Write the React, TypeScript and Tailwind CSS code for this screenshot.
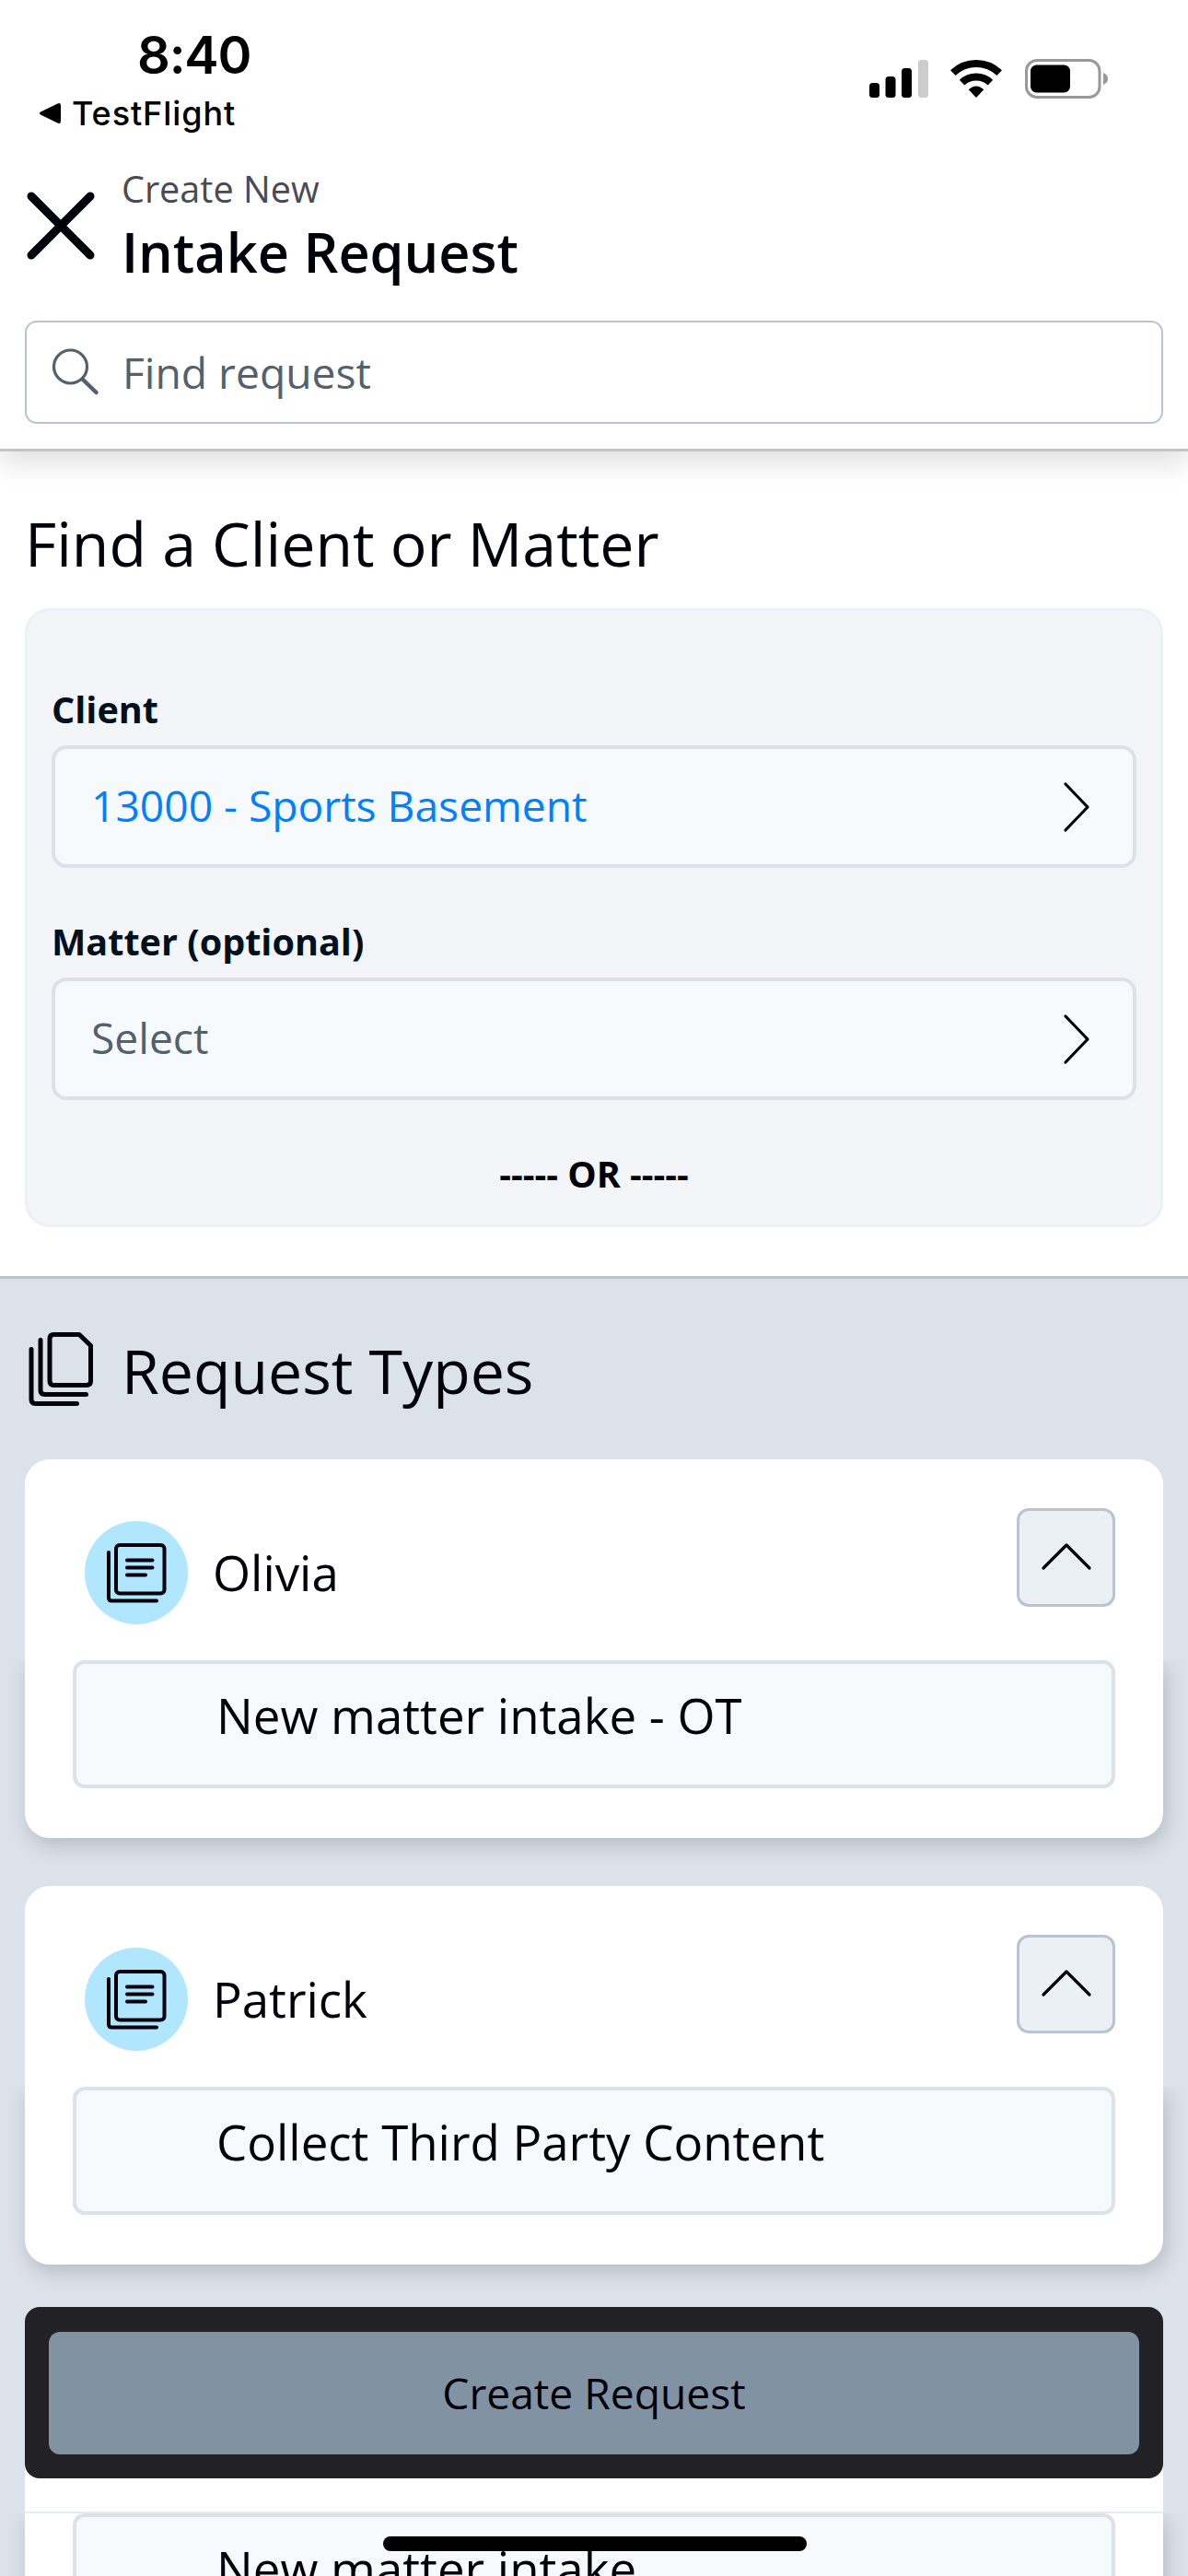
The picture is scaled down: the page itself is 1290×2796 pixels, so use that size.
import type { ReactNode } from "react";

function StatusIcons() {
  return (
    <svg width="262" height="46" viewBox="942 62 262 46" fill="none">
      <rect x="944" y="90" width="11" height="16" rx="3.5" fill="#000" />
      <rect x="961.5" y="83" width="11" height="23" rx="3.5" fill="#000" />
      <rect x="979" y="74" width="11" height="32" rx="3.5" fill="#000" />
      <rect x="997" y="65" width="11" height="41" rx="3.5" fill="#ccc" />
      <path d="M1034.800 79.200A36.500 36.500 0 0 1 1085.200 79.200" stroke="#000" strokeWidth="8" />
      <path d="M1044.600 89.600A22.500 22.500 0 0 1 1075.400 89.600" stroke="#000" strokeWidth="8" />
      <path d="M1060 106L1051.700 97.300Q1060 89.500 1068.300 97.300Z" fill="#000" />
      <rect x="1114.500" y="65.500" width="79.500" height="40" rx="11.500" stroke="#999" strokeWidth="3" />
      <rect x="1119" y="70.500" width="43" height="30" rx="6.500" fill="#000" />
      <path d="M1198 79Q1203 81 1203 85.500T1198 92Z" fill="#999" />
    </svg>
  );
}

function ChevronRight() {
  return (
    <svg width="30" height="56" viewBox="0 0 30 56" fill="none" stroke="#00000a" strokeWidth="3.200" strokeLinecap="round" strokeLinejoin="round">
      <path d="M3 3L27 28L3 53" />
    </svg>
  );
}

function Field({ label, children, className }: { label: string; children: ReactNode; className: string }) {
  return (
    <div className="flex flex-col gap-[19px]">
      <div className="text-[39.6px] leading-10 font-bold text-[#00101c]">{label}</div>
      <div className="flex h-[133px] items-center justify-between rounded-2xl border-4 border-[#dbe2e9] bg-[#f6fafd] pr-[46px] pl-[39px]">
        <span className={className}>{children}</span>
        <ChevronRight />
      </div>
    </div>
  );
}

function RequestCard({ name, item }: { name: string; item: string }) {
  return (
    <div className="h-[411px] shrink-0">
      <div className="flex h-[218px] items-start justify-between rounded-t-[27px] bg-white pt-[53px] pr-[52px] pl-[65px]">
        <div className="mt-[14px] flex items-center gap-[27px]">
          <div className="flex size-28 items-center justify-center rounded-full bg-[#b0e7ff]">
            <svg width="66" height="68" viewBox="115 1673 66 68" fill="none" stroke="#00000a" strokeWidth="4" strokeLinecap="round">
              <rect x="126" y="1677" width="52.500" height="52.500" rx="4" />
              <path d="M118 1685V1734Q118 1737.500 121.500 1737.500H170M138 1693.500H165.500M138 1701.500H165.500M138 1709.500H158" />
            </svg>
          </div>
          <span className="text-[52.8px] leading-[60px] text-[#00000a]">{name}</span>
        </div>
        <div className="flex size-[107px] items-center justify-center rounded-[13px] border-[3px] border-[#b8c4d2] bg-[#ebf0f4]">
          <svg width="56" height="32" viewBox="0 0 56 32" fill="none" stroke="#00000a" strokeWidth="3.200" strokeLinecap="round" strokeLinejoin="round" className="-mt-1">
            <path d="M3 29L28 4L53 29" />
          </svg>
        </div>
      </div>
      <div className="h-[193px] rounded-b-[27px] bg-white px-[52px] shadow-[3px_8px_22px_rgba(0,0,0,0.17)] [clip-path:inset(0_-40px_-40px_-40px)]">
        <div className="h-[139px] rounded-[13px] border-4 border-[#dbe2ea] bg-[#f6fafd] pt-[26px] pl-[152px] text-[52.8px] leading-[60px] text-[#00000a]">
          {item}
        </div>
      </div>
    </div>
  );
}

export default function App() {
  return (
    <div className="relative flex h-[2796px] w-[1290px] flex-col overflow-hidden bg-white font-['Open_Sans',sans-serif]">
      <header className="relative h-[490px] shrink-0 border-b-[3px] border-[#bac6d1] bg-white px-[27px] shadow-[0_12px_30px_rgba(0,0,0,0.13)]">
        <div className="flex items-start justify-between pt-8 pr-[59px] font-['Inter',sans-serif] text-black">
          <div className="flex flex-col pl-[15px]">
            <div className="pl-[107px] text-[56px] leading-[56px] font-semibold tracking-[-1.2px]">8:40</div>
            <div className="mt-[15px] flex items-center gap-[11px] text-[36px] leading-10 font-medium tracking-[0.9px]">
              <svg width="25" height="24" viewBox="0 0 25 24">
                <path d="M2 10.500L20.500 1.500Q24 0 24 4V20Q24 24 20.500 22.500L2 13.500Q0 12 2 10.500Z" fill="#000" />
              </svg>
              <span>TestFlight</span>
            </div>
          </div>
          <div className="pt-[30px]">
            <StatusIcons />
          </div>
        </div>
        <div className="mt-[42px] flex h-[118px] items-center gap-7">
          <svg width="77" height="78" viewBox="0 0 77 78" stroke="#00000a" strokeWidth="9" strokeLinecap="round" className="mt-0.5">
            <path d="M7 7L71 71M71 7L7 71" />
          </svg>
          <div className="flex flex-col gap-[18px]">
            <div className="text-[39.6px] leading-10 text-[#4a4a55]">Create New</div>
            <div className="text-[59.4px] leading-[60px] font-semibold text-[#00000a]">Intake Request</div>
          </div>
        </div>
        <div className="mt-[45px] flex h-28 items-center gap-6 rounded-[13px] border-2 border-[#b8c4d3] pl-7">
          <svg width="52" height="52" viewBox="0 0 52 52" fill="none" stroke="#53606d" strokeLinecap="round">
            <circle cx="19.500" cy="20" r="18" strokeWidth="3.200" />
            <path d="M33 34L47.500 48" strokeWidth="4.500" />
          </svg>
          <span className="mt-0.5 text-[46.2px] leading-[60px] text-[#53606d]">Find request</span>
        </div>
      </header>

      <section className="h-[895px] shrink-0 px-[27px] pt-[63px]">
        <h1 className="text-[66.2px] leading-[72px] text-[#00000a]">Find a Client or Matter</h1>
        <div className="mt-[35px] flex h-[672px] flex-col gap-[60px] rounded-[27px] border-[3px] border-[#ebf1f5] bg-[#f3f5f9] px-[26px] pt-[87px]">
          <Field label="Client" className="-mt-0.5 text-[46.2px] text-[#0080ff]">13000 - Sports Basement</Field>
          <Field label="Matter (optional)" className="-mt-0.5 text-[46.2px] text-[#53606d]">Select</Field>
          <div className="text-center text-[39.6px] leading-10 font-bold text-[#00000a]">----- OR -----</div>
        </div>
      </section>

      <section className="flex grow flex-col border-t-[3px] border-[#b8c4d2] bg-[#dce2ea] px-[27px] pt-[58px]">
        <div className="flex h-20 shrink-0 items-center gap-[30px] pl-1">
          <svg width="71" height="80" viewBox="31 1446 71 80" fill="none" stroke="#00000a" strokeWidth="5" strokeLinecap="round" strokeLinejoin="round">
            <path d="M58.500 1448.500H86L98.500 1460.500V1499Q98.500 1503.500 94 1503.500H58.500Q54 1503.500 54 1499V1453Q54 1448.500 58.500 1448.500Z" />
            <path d="M44 1454.500V1509Q44 1513.500 48.500 1513.500H93.500M34 1464.500V1519Q34 1523.500 38.500 1523.500H83.500" />
          </svg>
          <h2 className="mt-0.5 text-[66.2px] leading-[72px] text-[#00000a]">Request Types</h2>
        </div>
        <div className="mt-[58px] flex h-0 flex-col gap-[52px]">
          <RequestCard name="Olivia" item="New matter intake - OT" />
          <RequestCard name="Patrick" item="Collect Third Party Content" />
          <RequestCard name="" item="New matter intake" />
        </div>
      </section>

      <div className="absolute inset-x-[27px] top-[2504px]">
        <div className="h-[186px] rounded-2xl bg-[#222125] px-[26px] pt-[27px]">
          <div className="flex h-[133px] items-center justify-center rounded-xl bg-[#8192a2] text-[46.2px] text-[#00000a]">
            Create Request
          </div>
        </div>
        <div className="mt-9 h-0.5 bg-[#e6ebef]" />
      </div>
      <div className="absolute top-[2753px] left-[416px] h-4 w-[460px] rounded-full bg-black" />
    </div>
  );
}
